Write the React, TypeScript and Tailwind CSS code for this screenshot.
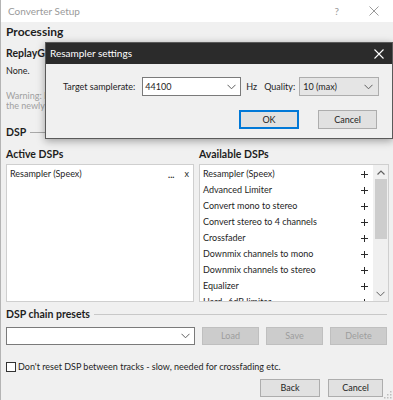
import React from "react";

const Chevron = ({ className = "" }: { className?: string }) => (
  <svg width="9" height="6" viewBox="0 0 9 6" className={className}>
    <polyline points="0.5,0.8 4.5,4.8 8.5,0.8" fill="none" stroke="#606060" strokeWidth="1" />
  </svg>
);

const ChevronUp = () => (
  <svg width="8" height="5" viewBox="0 0 8 5">
    <polyline points="0.5,4.5 4,1 7.5,4.5" fill="none" stroke="#606060" strokeWidth="1.2" />
  </svg>
);

const Plus = () => (
  <svg width="7" height="7" viewBox="0 0 7 7" aria-label="+">
    <path d="M3.5 0 V7 M0 3.5 H7" stroke="#2a2a2a" strokeWidth="1" />
  </svg>
);

const available = [
  "Resampler (Speex)",
  "Advanced Limiter",
  "Convert mono to stereo",
  "Convert stereo to 4 channels",
  "Crossfader",
  "Downmix channels to mono",
  "Downmix channels to stereo",
  "Equalizer",
  "Hard -6dB limiter",
];

export default function App() {
  return (
    <div className="relative w-[393px] h-[400px] overflow-hidden bg-[#f0f0f0] border-l border-[#b4b4b4] font-['Lato',sans-serif] text-[9px] text-[#1e1e1e]">
      {/* Window title bar */}
      <div className="h-[22px] bg-white flex items-center pl-[7px] pr-[14px]">
        <span className="text-[10px] text-[#9a9a9a] flex-1">Converter Setup</span>
        <span className="text-[10px] text-[#9a9a9a] mr-[30px]">?</span>
        <svg width="10" height="10" viewBox="0 0 10 10">
          <path d="M0.5 0.5 L9.5 9.5 M9.5 0.5 L0.5 9.5" stroke="#9a9a9a" strokeWidth="1" />
        </svg>
      </div>

      <div className="pl-[5px] pr-[5px]">
        <div className="mt-[3px] h-[14px] leading-[14px] text-[12px] font-bold">Processing</div>
        <div className="mt-[8px] h-[13px] leading-[13px] text-[10.5px] font-bold w-[39px] overflow-hidden whitespace-nowrap">ReplayGain</div>
        <div className="mt-[5px] h-[12px] leading-[12px]">None.</div>
        <div className="mt-[14px] leading-[10px] text-[#a0a0a0] w-[39px] overflow-hidden whitespace-nowrap">
          <div>Warning: ReplayGain</div>
          <div>the newly created</div>
        </div>

        <div className="mt-[15px] h-[13px] flex items-center gap-[4px]">
          <span className="text-[10.5px] font-bold leading-[13px]">DSP</span>
          <div className="flex-1 h-px bg-[#a8a8a8]" />
        </div>

        <div className="mt-[9px] grid grid-cols-[188px_190px] gap-x-[5px]">
          <div className="h-[13px] leading-[13px] text-[10.5px] font-bold">Active DSPs</div>
          <div className="h-[13px] leading-[13px] text-[10.5px] font-bold">Available DSPs</div>

          <div className="mt-[3px] h-[138px] bg-white border border-[#cfcfcf] pt-[1px]">
            <div className="h-[16px] flex items-center pl-[3px] pr-[4px]">
              <span className="flex-1">Resampler (Speex)</span>
              <span className="font-bold mr-[10px] leading-none">...</span>
              <span>x</span>
            </div>
          </div>

          <div className="mt-[3px] h-[138px] bg-white border border-[#cfcfcf] flex overflow-hidden">
            <div className="flex-1 pt-[1px] overflow-hidden">
              {available.map((a) => (
                <div key={a} className="h-[16px] flex items-center pl-[3px] pr-[5px] whitespace-nowrap">
                  <span className="flex-1">{a}</span>
                  <Plus />
                </div>
              ))}
            </div>
            <div className="w-[15px] bg-[#f0f0f0] flex flex-col items-center">
              <div className="h-[14px] flex items-center justify-center">
                <ChevronUp />
              </div>
              <div className="w-[12px] h-[60px] bg-[#cdcdcd]" />
              <div className="flex-1" />
              <div className="h-[14px] flex items-center justify-center">
                <Chevron />
              </div>
            </div>
          </div>
        </div>

        <div className="mt-[6px] h-[13px] flex items-center gap-[4px]">
          <span className="text-[10.5px] font-bold leading-[13px]">DSP chain presets</span>
          <div className="flex-1 h-px bg-[#c8c8c8] mr-[1px]" />
        </div>

        <div className="mt-[6px] h-[18px] flex gap-[7px]">
          <div className="w-[189px] h-[18px] bg-white border border-[#7a7a7a] flex items-center justify-end pr-[4px]">
            <Chevron />
          </div>
          <div className="w-[57px] h-[18px] bg-[#cccccc] border border-[#bfbfbf] flex items-center justify-center text-[#9d9d9d]">Load</div>
          <div className="w-[57px] h-[18px] bg-[#cccccc] border border-[#bfbfbf] flex items-center justify-center text-[#9d9d9d]">Save</div>
          <div className="w-[57px] h-[18px] bg-[#cccccc] border border-[#bfbfbf] flex items-center justify-center text-[#9d9d9d]">Delete</div>
        </div>

        <div className="mt-[16px] h-[12px] flex items-center gap-[2px]">
          <div className="w-[10px] h-[10px] bg-white border border-[#333]" />
          <span>Don't reset DSP between tracks - slow, needed for crossfading etc.</span>
        </div>

        <div className="mt-[6px] flex justify-end gap-[8px] pr-[5px]">
          <div className="w-[60px] h-[18px] bg-[#e1e1e1] border border-[#adadad] flex items-center justify-center">Back</div>
          <div className="w-[55px] h-[18px] bg-[#e1e1e1] border border-[#adadad] flex items-center justify-center">Cancel</div>
        </div>
      </div>

      {/* resize grip */}
      <svg className="absolute right-[1px] bottom-[1px]" width="8" height="8" viewBox="0 0 8 8">
        <rect x="6" y="0" width="1.5" height="1.5" fill="#bdbdbd" />
        <rect x="3" y="3" width="1.5" height="1.5" fill="#bdbdbd" />
        <rect x="6" y="3" width="1.5" height="1.5" fill="#bdbdbd" />
        <rect x="0" y="6" width="1.5" height="1.5" fill="#bdbdbd" />
        <rect x="3" y="6" width="1.5" height="1.5" fill="#bdbdbd" />
        <rect x="6" y="6" width="1.5" height="1.5" fill="#bdbdbd" />
      </svg>

      {/* Modal dialog */}
      <div className="absolute left-[44px] top-[42px] w-[348px] h-[97px] bg-[#f0f0f0] border border-[#5a5a5a] shadow-[0_2px_8px_rgba(0,0,0,0.35)] flex flex-col">
        <div className="h-[21px] bg-[#2b2b2b] flex items-center pl-[4px] pr-[8px]">
          <span className="flex-1 text-white text-[10px]">Resampler settings</span>
          <svg width="10" height="10" viewBox="0 0 10 10">
            <path d="M0.5 0.5 L9.5 9.5 M9.5 0.5 L0.5 9.5" stroke="#ffffff" strokeWidth="1.1" />
          </svg>
        </div>
        <div className="mt-[13px] h-[19px] flex items-center pl-[17px]">
          <span className="mr-[7px]">Target samplerate:</span>
          <div className="w-[99px] h-[19px] bg-white border border-[#7a7a7a] flex items-center pl-[2px] pr-[4px]">
            <span className="flex-1">44100</span>
            <Chevron />
          </div>
          <span className="ml-[5px] mr-[7px]">Hz</span>
          <span className="mr-[4px]">Quality:</span>
          <div className="w-[80px] h-[19px] bg-[#e5e5e5] border border-[#adadad] flex items-center pl-[3px] pr-[5px]">
            <span className="flex-1">10 (max)</span>
            <Chevron />
          </div>
        </div>
        <div className="mt-[14px] flex justify-end gap-[19px] pr-[15px]">
          <div className="w-[60px] h-[19px] bg-[#e1e1e1] border-2 border-[#0078d7] flex items-center justify-center">OK</div>
          <div className="w-[59px] h-[19px] bg-[#e1e1e1] border border-[#adadad] flex items-center justify-center">Cancel</div>
        </div>
      </div>
    </div>
  );
}
